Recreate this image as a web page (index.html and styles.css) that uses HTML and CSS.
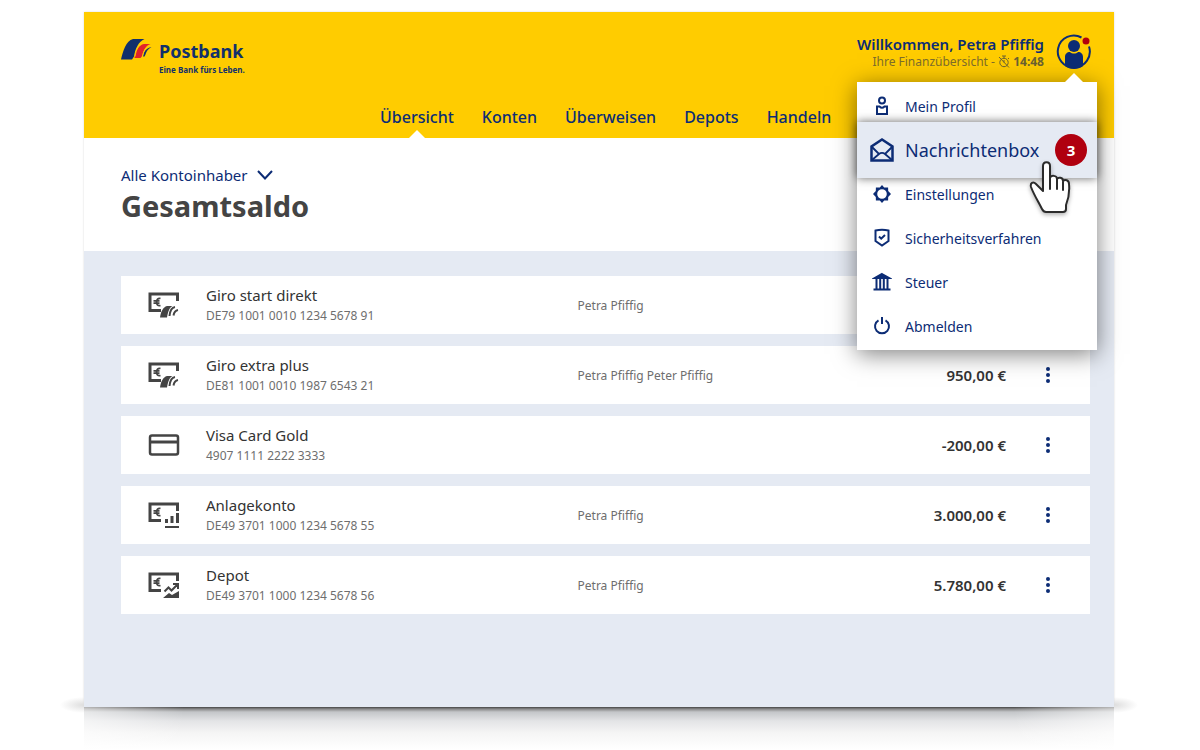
FILE: index.html
```html
<!DOCTYPE html>
<html lang="de">
<head>
<meta charset="utf-8">
<meta name="viewport" content="width=device-width, initial-scale=1">
<title>Postbank – Finanzübersicht</title>
<link rel="stylesheet" href="styles.css">
</head>
<body>
<svg class="defs" aria-hidden="true">
  <defs>
    <symbol id="note" viewBox="0 0 32 28">
      <path d="M13 19.500H2V3h27.500v7" fill="none" stroke="currentColor" stroke-width="3"/>
      <path d="M12.500 7.500c-5-1.500-5.500 8.500 0 7M5.500 9.800h6M5.500 12.200h6" fill="none" stroke="currentColor" stroke-width="1.800"/>
    </symbol>
    <symbol id="giro" viewBox="0 0 32 28">
      <use href="#note" width="32" height="28"/>
      <path d="M12 26.500c1-6 3-10.500 7-11.500h5.500c-3.500 2-4.500 6-5.500 11.500z" fill="currentColor"/>
      <path d="M21.500 25c.5-5 2-8.500 5.500-9M25.500 24.500c.5-3 1.500-5 4.500-5.500" fill="none" stroke="currentColor" stroke-width="2"/>
    </symbol>
    <symbol id="dots" viewBox="0 0 6 16">
      <g fill="currentColor"><circle cx="3" cy="2" r="2"/><circle cx="3" cy="8" r="2"/><circle cx="3" cy="14" r="2"/></g>
    </symbol>
  </defs>
</svg>

<div class="app">
  <header class="header">
    <div class="header-top">
      <a class="brand" href="#">
        <svg class="brand-mark" viewBox="0 0 31 22" aria-hidden="true">
          <path d="M0 21.500C2 13 5 3 12 1h11.500c-6 3-9 9-10.500 17.500l-2 3z" fill="#12306b"/>
          <path d="M13.500 20c1-7 4-13 9.500-14h6.500c-5 2-7 6-8 11.500l-2 2.500z" fill="#e2222b"/>
          <path d="M22 18.500c1-5 3-8.500 8.500-9.500-4 2.500-5 4.500-6 7.500l-1 2z" fill="#12306b"/>
          <path d="M14 18.500c1-7 4-13 10-15.500M21.500 18c1-5 3-8.500 7-10.500" stroke="#fc0" stroke-width="1" fill="none"/>
        </svg>
        <span class="brand-text">
          <span class="brand-name">Postbank</span>
          <span class="brand-claim">Eine Bank fürs Leben.</span>
        </span>
      </a>

      <div class="user">
        <div class="user-text">
          <div class="welcome">Willkommen, Petra Pfiffig</div>
          <div class="session">Ihre Finanzübersicht -
            <svg class="timer" viewBox="0 0 12 13" aria-hidden="true"><circle cx="6" cy="7.500" r="4.200"/><path d="M4 1h4M6 1v2M6 7.500V5M1 2l10 10.500M10 3l1 1"/></svg>
            <b>14:48</b>
          </div>
        </div>
        <button class="avatar" type="button" aria-label="Benutzermenü" aria-expanded="true">
          <svg viewBox="0 0 36 36" aria-hidden="true">
            <path d="M25.500 3.500A16 16 0 1 0 33 12.500" fill="none" stroke="#0c2c75" stroke-width="2"/>
            <circle cx="18" cy="12" r="6" fill="#0c2c75"/>
            <path d="M9 32V23c0-3 2-5 5-5 2 2 6 2 8 0 3 0 5 2 5 5v9c-5 4-13 4-18 0z" fill="#0c2c75"/>
            <circle cx="30" cy="7" r="3.500" fill="#b3000c"/>
          </svg>
        </button>

        <nav class="menu" aria-label="Benutzermenü">
          <a class="menu-item" href="#">
            <span class="menu-icon"><svg viewBox="0 0 20 20" aria-hidden="true"><circle cx="10" cy="4.500" r="3"/><path d="M5 18V10.500h2.500c1.500 1.500 3.500 1.500 5 0H15V18z"/></svg></span>
            Mein Profil
          </a>
          <a class="menu-item menu-item-active" href="#">
            <span class="menu-icon"><svg viewBox="0 0 26 26" aria-hidden="true"><path d="M2.500 9.500v14h21v-14L13 2.500z" stroke-width="2.500"/><path d="M3 10l7 7M23 10l-7 7M3 23l7-6c2-1.500 4-1.500 6 0l7 6" stroke-width="1.800"/></svg></span>
            Nachrichtenbox
            <span class="badge">3</span>
          </a>
          <a class="menu-item" href="#">
            <span class="menu-icon"><svg viewBox="0 0 20 20" aria-hidden="true"><path d="M10 1l2.200 2.600 3.900-.200.100 3.500L19 10l-2.800 3.100-.1 3.500-3.900-.2L10 19l-2.200-2.600-3.900.2-.1-3.500L1 10l2.800-3.100.1-3.500 3.900.2zM10 5.200a4.800 4.800 0 1 0 0 9.600 4.800 4.800 0 0 0 0-9.600z" fill="currentColor" fill-rule="evenodd" stroke="none"/></svg></span>
            Einstellungen
          </a>
          <a class="menu-item" href="#">
            <span class="menu-icon"><svg viewBox="0 0 20 20" aria-hidden="true"><path d="M3.500 2.500c4-.8 9-.8 13 0v10.500L10 17.500 3.500 13z"/><path d="M7 8.500l2.200 2.200L13 7"/></svg></span>
            Sicherheitsverfahren
          </a>
          <a class="menu-item" href="#">
            <span class="menu-icon"><svg viewBox="0 0 20 20" aria-hidden="true"><path d="M10 2l7 4H3z" fill="currentColor"/><path d="M1.500 17.500h17M4.500 7v10M8.200 7v10M11.800 7v10M15.500 7v10"/></svg></span>
            Steuer
          </a>
          <a class="menu-item" href="#">
            <span class="menu-icon"><svg viewBox="0 0 20 20" aria-hidden="true"><path d="M6.500 4.300a7 7 0 1 0 7 0M10 1v7"/></svg></span>
            Abmelden
          </a>
          <svg class="pointer" viewBox="0 0 42 53" aria-hidden="true">
            <path d="M14 30V5c0-5 7-5 7 0v12c1-3 7-3 7 1 1-2 6-2 6 2 2-2 6-1 6 3 1 10-1 16-3 21v4c0 2-1 3-3 3H17c-2 0-3-1-4-3C9 40 5 34 2 26c-1-4 2-6 5-3z" fill="#fff" stroke="#2b2b2b" stroke-width="2" stroke-linejoin="round"/>
            <path d="M21 16v12M28 18v10M34 21v8" stroke="#2b2b2b" stroke-width="2" stroke-linecap="round"/>
          </svg>
        </nav>
      </div>
    </div>

    <nav class="main-nav" aria-label="Hauptnavigation">
      <a class="current" href="#">Übersicht</a>
      <a href="#">Konten</a>
      <a href="#">Überweisen</a>
      <a href="#">Depots</a>
      <a href="#">Handeln</a>
    </nav>
  </header>

  <section class="summary">
    <button class="owner-filter" type="button">Alle Kontoinhaber
      <svg viewBox="0 0 18 12" aria-hidden="true"><path d="M2 2l7 7.500L16 2" fill="none" stroke="currentColor" stroke-width="2"/></svg>
    </button>
    <h1>Gesamtsaldo</h1>
  </section>

  <main>
    <ul class="accounts">
      <li class="account">
        <svg class="account-icon" aria-hidden="true"><use href="#giro"/></svg>
        <div><div class="name">Giro start direkt</div><div class="number">DE79 1001 0010 1234 5678 91</div></div>
        <div class="holder">Petra Pfiffig</div>
      </li>
      <li class="account">
        <svg class="account-icon" aria-hidden="true"><use href="#giro"/></svg>
        <div><div class="name">Giro extra plus</div><div class="number">DE81 1001 0010 1987 6543 21</div></div>
        <div class="holder">Petra Pfiffig Peter Pfiffig</div>
        <div class="amount">950,00 €</div>
        <button class="more" type="button" aria-label="Aktionen"><svg aria-hidden="true"><use href="#dots"/></svg></button>
      </li>
      <li class="account">
        <svg class="account-icon" viewBox="0 0 32 28" aria-hidden="true"><rect x="2" y="4.500" width="28" height="19" rx="2" fill="none" stroke="currentColor" stroke-width="2.500"/><path d="M2 11h28" stroke="currentColor" stroke-width="3"/></svg>
        <div><div class="name">Visa Card Gold</div><div class="number">4907 1111 2222 3333</div></div>
        <div class="holder"></div>
        <div class="amount">-200,00 €</div>
        <button class="more" type="button" aria-label="Aktionen"><svg aria-hidden="true"><use href="#dots"/></svg></button>
      </li>
      <li class="account">
        <svg class="account-icon" viewBox="0 0 32 28" aria-hidden="true"><use href="#note" width="32" height="28"/><path d="M18.500 22v-4M24 22v-7M29.500 22V12" stroke="currentColor" stroke-width="3"/><path d="M17 26h14" stroke="currentColor" stroke-width="2"/></svg>
        <div><div class="name">Anlagekonto</div><div class="number">DE49 3701 1000 1234 5678 55</div></div>
        <div class="holder">Petra Pfiffig</div>
        <div class="amount">3.000,00 €</div>
        <button class="more" type="button" aria-label="Aktionen"><svg aria-hidden="true"><use href="#dots"/></svg></button>
      </li>
      <li class="account">
        <svg class="account-icon" viewBox="0 0 32 28" aria-hidden="true"><use href="#note" width="32" height="28"/><path d="M16.500 20.500l4-4 3 3 6-6M25 13h5v5" fill="none" stroke="currentColor" stroke-width="2"/><path d="M15 27l6-5 3 2 7-4v7z" fill="currentColor"/></svg>
        <div><div class="name">Depot</div><div class="number">DE49 3701 1000 1234 5678 56</div></div>
        <div class="holder">Petra Pfiffig</div>
        <div class="amount">5.780,00 €</div>
        <button class="more" type="button" aria-label="Aktionen"><svg aria-hidden="true"><use href="#dots"/></svg></button>
      </li>
    </ul>
  </main>
</div>
<div class="floor-shadow"></div>
</body>
</html>
```

FILE: styles.css
```css
* { box-sizing: border-box; }

body {
  margin: 0;
  padding: 12px 86px 0 84px;
  background: #fff;
  color: #333;
  font-family: "Noto Sans", "Open Sans", sans-serif;
}

a { color: inherit; text-decoration: none; }

button {
  padding: 0;
  border: 0;
  background: none;
  color: inherit;
  font: inherit;
  cursor: pointer;
}

svg { display: block; }

.defs { position: absolute; width: 0; height: 0; }

.app {
  background: #e5eaf3;
  box-shadow: 0 0 2px rgba(0, 0, 0, 0.15);
}

.header {
  display: flex;
  flex-direction: column;
  justify-content: space-between;
  min-height: 126px;
  background: #fc0;
  color: #0c2c75;
}

.header-top {
  display: flex;
  justify-content: space-between;
  align-items: flex-start;
  padding: 22px 22px 0 37px;
}

.brand { display: flex; gap: 7px; padding-top: 4px; color: #12306b; }
.brand-mark { width: 31px; height: 22px; }
.brand-text { display: flex; flex-direction: column; }
.brand-name { font-size: 18px; line-height: 26px; font-weight: 700; }
.brand-claim { font-size: 8px; line-height: 12px; font-weight: 700; }

.user { position: relative; display: flex; gap: 12px; }
.user-text { text-align: right; }
.welcome { font-size: 15px; line-height: 20px; font-weight: 600; }
.session { font-size: 12px; line-height: 16px; color: #7d6c2c; }
.session b { color: #6b6132; }
.timer {
  display: inline-block;
  width: 12px;
  height: 13px;
  vertical-align: -2px;
  fill: none;
  stroke: #6b6132;
}
.avatar { width: 36px; height: 36px; }

.menu {
  position: absolute;
  top: 48px;
  right: -5px;
  z-index: 2;
  width: 240px;
  padding: 2px 0;
  background: #fff;
  box-shadow: 0 4px 22px rgba(0, 0, 0, 0.5);
}
.menu::before {
  content: "";
  position: absolute;
  top: -9px;
  right: 13px;
  border: 10px solid transparent;
  border-top: 0;
  border-bottom-color: #fff;
}
.menu-item {
  display: flex;
  align-items: center;
  gap: 10px;
  height: 44px;
  padding: 0 10px 0 12px;
  font-size: 14px;
}
.menu-item-active {
  position: relative;
  height: 56px;
  margin: -6px 0;
  background: #e5eaf3;
  font-size: 18px;
  box-shadow: 0 0 9px rgba(0, 0, 0, 0.6);
}
.menu-icon { display: flex; justify-content: center; width: 26px; }
.menu-icon svg {
  width: 20px;
  height: 20px;
  fill: none;
  stroke: currentColor;
  stroke-width: 2;
}
.menu-item-active .menu-icon svg { width: 26px; height: 26px; }
.badge {
  width: 32px;
  height: 32px;
  margin-left: auto;
  border-radius: 50%;
  background: #b0000f;
  color: #fff;
  font-size: 15px;
  font-weight: 700;
  line-height: 32px;
  text-align: center;
}
.pointer {
  position: absolute;
  top: 79px;
  right: 26px;
  width: 42px;
  height: 53px;
  filter: drop-shadow(0 2px 2px rgba(0, 0, 0, 0.3));
}

.main-nav {
  display: flex;
  gap: 28px;
  padding-left: 296px;
  font-size: 16px;
  font-weight: 500;
  line-height: 22px;
}
.main-nav a { position: relative; padding-bottom: 10px; }
.main-nav .current::after {
  content: "";
  position: absolute;
  bottom: 0;
  left: 50%;
  margin-left: -8px;
  border: 8px solid transparent;
  border-top: 0;
  border-bottom-color: #fff;
}

.summary {
  min-height: 113px;
  padding: 26px 37px 24px;
  background: #fff;
}
.owner-filter {
  display: flex;
  align-items: center;
  gap: 8px;
  color: #0c2c75;
  font-size: 15px;
  line-height: 22px;
}
.owner-filter svg { width: 18px; height: 12px; }
h1 {
  margin: 0;
  color: #444;
  font-size: 29px;
  line-height: 40px;
  font-weight: 700;
}

.accounts {
  display: grid;
  gap: 12px;
  margin: 0;
  padding: 25px 24px 93px 37px;
  list-style: none;
}
.account {
  display: grid;
  grid-template-columns: 32px 346fr 260fr 143fr 32px;
  column-gap: 26px;
  align-items: center;
  height: 58px;
  padding: 0 26px 0 27px;
  background: #fff;
}
.account-icon { width: 32px; height: 28px; color: #444; }
.name { font-size: 15px; line-height: 22px; }
.number { font-size: 12px; line-height: 20px; color: #6e6e6e; }
.holder { font-size: 12px; color: #6e6e6e; }
.amount { font-size: 15px; font-weight: 600; text-align: right; }
.more { display: flex; justify-content: center; width: 32px; color: #0c2c75; }
.more svg { width: 6px; height: 16px; }

.floor-shadow {
  position: relative;
  height: 43px;
  background:
    linear-gradient(90deg, rgba(255, 255, 255, 0.6), transparent 100px, transparent calc(100% - 100px), rgba(255, 255, 255, 0.6)),
    linear-gradient(#444, #888 2px, #c4c6c9 5px, #e3e4e6 14px, #f5f5f5 26px, #fff 42px);
}
.floor-shadow::before,
.floor-shadow::after {
  content: "";
  position: absolute;
  top: -10px;
  width: 24px;
  height: 16px;
}
.floor-shadow::before {
  right: 100%;
  background: radial-gradient(ellipse 24px 8px at right, #ddd, transparent);
}
.floor-shadow::after {
  left: 100%;
  background: radial-gradient(ellipse 24px 8px at left, #ddd, transparent);
}
```
